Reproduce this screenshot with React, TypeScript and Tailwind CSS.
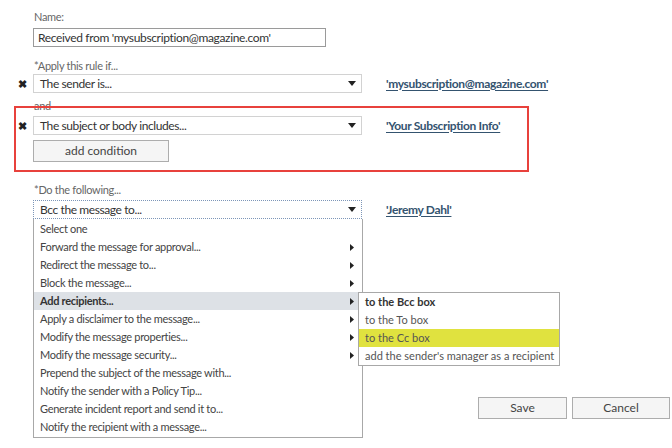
import React from "react";

const font = { fontFamily: 'Lato, "Open Sans", Arial, sans-serif' };

function Caret() {
  return (
    <svg width="8" height="5" viewBox="0 0 8 5" className="shrink-0">
      <path d="M0 0h8L4 5z" fill="#222" />
    </svg>
  );
}

function SubArrow() {
  return (
    <svg width="4" height="7" viewBox="0 0 4 7" className="shrink-0">
      <path d="M0 0l4 3.5L0 7z" fill="#222" />
    </svg>
  );
}

function Remove() {
  return (
    <span className="w-[15px] shrink-0 text-[11px] font-bold leading-none text-[#222]">
      ✖
    </span>
  );
}

function Select({ label, focus }: { label: string; focus?: boolean }) {
  return (
    <div
      className={
        "flex h-[19px] w-[329px] items-center justify-between bg-white pl-[6px] pr-[5px] text-[12px] tracking-[-0.4px] text-[#333] " +
        (focus ? "border border-dotted border-[#7d96b8]" : "border border-[#d2d2d2]")
      }
    >
      <span>{label}</span>
      <Caret />
    </div>
  );
}

function Link({ text }: { text: string }) {
  return (
    <span className="ml-[24px] whitespace-nowrap text-[12px] font-bold tracking-[-0.35px] text-[#34536f] underline underline-offset-2">
      {text}
    </span>
  );
}

function Label({ text, mt }: { text: string; mt: string }) {
  return (
    <div className={"ml-[20px] h-[15px] text-[11px] leading-[15px] tracking-[-0.3px] text-[#666] " + mt}>
      {text}
    </div>
  );
}

const actions: { label: string; arrow?: boolean; active?: boolean }[] = [
  { label: "Select one" },
  { label: "Forward the message for approval...", arrow: true },
  { label: "Redirect the message to...", arrow: true },
  { label: "Block the message...", arrow: true },
  { label: "Add recipients...", arrow: true, active: true },
  { label: "Apply a disclaimer to the message...", arrow: true },
  { label: "Modify the message properties...", arrow: true },
  { label: "Modify the message security...", arrow: true },
  { label: "Prepend the subject of the message with..." },
  { label: "Notify the sender with a Policy Tip..." },
  { label: "Generate incident report and send it to..." },
  { label: "Notify the recipient with a message..." },
];

const recipients = [
  { label: "to the Bcc box", bold: true },
  { label: "to the To box" },
  { label: "to the Cc box", mark: true },
  { label: "add the sender's manager as a recipient" },
];

export default function App() {
  return (
    <div className="relative h-[448px] w-[672px] overflow-hidden bg-white" style={font}>
      <div className="flex flex-col pl-[14px]">
        <Label text="Name:" mt="mt-[9px]" />
        <div className="ml-[19px] mt-[4px] flex h-[19px] w-[293px] items-center border border-[#9a9a9a] pl-[4px] text-[12px] tracking-[-0.35px] text-[#333]">
          Received from 'mysubscription@magazine.com'
        </div>

        <Label text="*Apply this rule if..." mt="mt-[11px]" />
        <div className="mt-[1px] flex items-center pl-[4px]">
          <Remove />
          <Select label="The sender is..." />
          <Link text="'mysubscription@magazine.com'" />
        </div>
        <Label text="and" mt="mt-[5px]" />

        <div className="mt-[3px] flex items-center pl-[4px]">
          <Remove />
          <Select label="The subject or body includes..." />
          <Link text="'Your Subscription Info'" />
        </div>
        <button className="ml-[19px] mt-[5px] h-[22px] w-[136px] border border-[#adadad] bg-[#f5f5f5] text-[12px] text-[#444]">
          add condition
        </button>

        <Label text="*Do the following..." mt="mt-[20px]" />
        <div className="relative ml-[19px] mt-[3px] flex items-center">
          <Select label="Bcc the message to..." focus />
          <Link text="'Jeremy Dahl'" />

          <div className="absolute left-0 top-[19px] z-10 flex w-[330px] flex-col border border-t-0 border-[#a8a8a8] bg-white py-[1px]">
            {actions.map((a) => (
              <div
                key={a.label}
                className={
                  "relative flex h-[18px] items-center justify-between pl-[6px] pr-[8px] text-[11px] tracking-[-0.3px] " +
                  (a.active ? "bg-[#dde1e6] font-bold text-[#333]" : "text-[#444]")
                }
              >
                <span>{a.label}</span>
                {a.arrow ? <SubArrow /> : null}
                {a.active ? (
                  <div className="absolute left-[324px] top-0 z-20 flex w-[202px] flex-col border border-[#a8a8a8] bg-white font-normal tracking-normal">
                    {recipients.map((r) => (
                      <div
                        key={r.label}
                        className={
                          "flex h-[18px] items-center whitespace-nowrap pl-[6px] text-[11px] " +
                          (r.bold ? "font-bold text-[#333] " : "text-[#555] ") +
                          (r.mark ? "bg-[#e0e23f]" : "")
                        }
                      >
                        {r.label}
                      </div>
                    ))}
                  </div>
                ) : null}
              </div>
            ))}
          </div>
        </div>

        <div className="mt-[178px] flex justify-end gap-[5px] pr-[2px]">
          <button className="h-[22px] w-[89px] border border-[#adadad] bg-[#f5f5f5] text-[12px] text-[#444]">
            Save
          </button>
          <button className="h-[22px] w-[98px] border border-[#adadad] bg-[#f5f5f5] text-[12px] text-[#444]">
            Cancel
          </button>
        </div>
      </div>

      {/* highlight annotation */}
      <div className="pointer-events-none absolute left-[14px] top-[106px] h-[66px] w-[515px] border-2 border-[#e8413c]" />
    </div>
  );
}
